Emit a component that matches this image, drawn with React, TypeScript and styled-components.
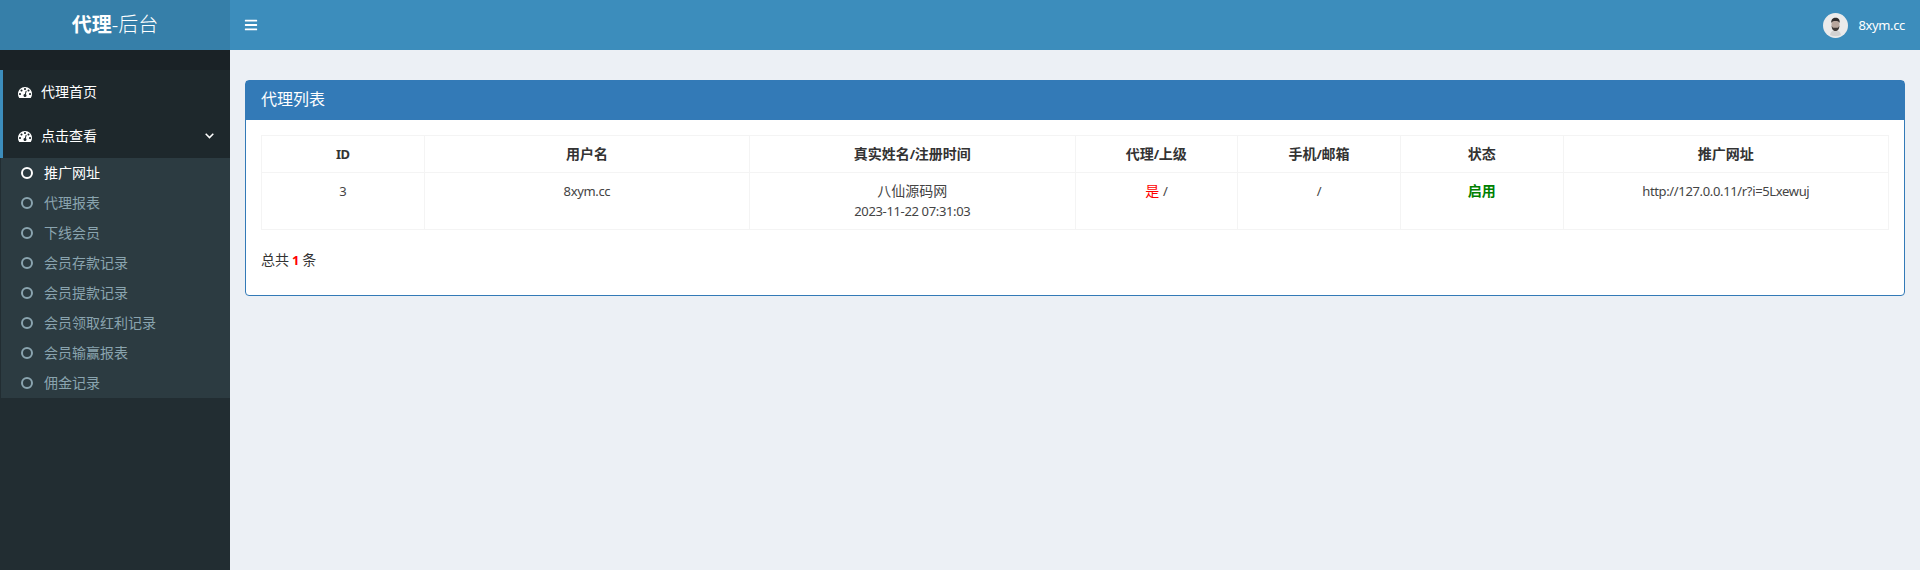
import React from "react";
import styled, { createGlobalStyle } from "styled-components";
import { FaBars } from "react-icons/fa";

const GlobalStyle = createGlobalStyle`
  html,
  body {
    margin: 0;
    height: 100%;
  }

  body {
    background: #ecf0f5;
    color: #333;
    font-family: "Noto Sans", "Noto Sans CJK SC", sans-serif;
    font-size: 14px;
    line-height: 20px;
  }

  #root {
    height: 100%;
  }

  * {
    box-sizing: border-box;
  }
`;

const Page = styled.div`
  display: grid;
  grid-template-columns: 230px 1fr;
  grid-template-rows: 50px 1fr;
  height: 100vh;
  overflow: hidden;
`;

const Logo = styled.div`
  display: flex;
  align-items: center;
  justify-content: center;
  background: #367fa9;
  color: #fff;
  font-size: 20px;
  font-weight: 300;

  b {
    font-weight: 700;
  }
`;

const TopBar = styled.header`
  display: flex;
  align-items: center;
  justify-content: space-between;
  padding: 0 15px;
  background: #3c8dbc;
  color: #fff;
  font-size: 14px;
`;

const MenuToggle = styled(FaBars)`
  margin-left: -1px;
`;

const UserBox = styled.div`
  display: flex;
  align-items: center;
  gap: 10px;
`;

/* latin text sits a bit smaller and tighter, the original face is narrow */
const Latin = styled.span`
  font-size: 13px;
  letter-spacing: -0.35px;
`;

const Sidebar = styled.aside`
  background: #222d32;
`;

const SidebarTop = styled.div`
  height: 20px;
  background: #1a2226;
`;

const MainItem = styled.div`
  display: flex;
  align-items: center;
  height: 44px;
  padding: 0 15px;
  border-left: 3px solid #3c8dbc;
  background: #1e282c;
  color: #fff;
  gap: 9px;
`;

const MainItemLabel = styled.span`
  flex: 1;
`;

const Chevron = styled.svg`
  margin-right: 1px;
`;

const SubMenu = styled.div`
  margin-left: 1px;
  background: #2c3b41;
`;

const SubItem = styled.div<{ $active?: boolean }>`
  display: flex;
  align-items: center;
  gap: 11px;
  height: 30px;
  padding-left: 20px;
  color: ${(props) => (props.$active ? "#fff" : "#8aa4af")};
`;

const Ring = styled.span`
  width: 12px;
  height: 12px;
  border: 2.5px solid currentColor;
  border-radius: 50%;
`;

const Content = styled.main`
  padding: 30px 15px 0;
`;

const Box = styled.section`
  height: 216px;
  border: 1px solid #337ab7;
  border-radius: 4px;
  background: #fff;
`;

const BoxTitle = styled.h3`
  display: flex;
  align-items: center;
  height: 39px;
  margin: 0;
  padding: 0 15px 3px;
  background: #337ab7;
  color: #fff;
  font-size: 16px;
  font-weight: 400;
`;

const BoxBody = styled.div`
  padding: 15px;
`;

const Table = styled.table`
  width: 100%;
  border-collapse: collapse;
  table-layout: fixed;
  text-align: center;

  th,
  td {
    border: 1px solid #f4f4f4;
    padding: 8px;
    vertical-align: top;
  }

  th {
    font-weight: 700;
  }

  td {
    color: #444;
  }
`;

const Column = styled.col<{ $wide?: boolean }>`
  width: ${(props) => (props.$wide ? "20%" : "10%")};
`;

const Yes = styled.span`
  color: #f00;
`;

const Enabled = styled.b`
  color: green;
`;

const Total = styled.div`
  margin-top: 20px;

  b {
    color: #f00;
  }
`;

const navItems = [
  "代理报表",
  "下线会员",
  "会员存款记录",
  "会员提款记录",
  "会员领取红利记录",
  "会员输赢报表",
  "佣金记录",
];

const GaugeIcon = () => (
  <svg width="14" height="14" viewBox="0 0 1792 1792" fill="currentColor">
    <path
      fillRule="evenodd"
      d="M384 1152q0-53-37.500-90.500T256 1024t-90.500 37.500T128 1152t37.500 90.500T256 1280t90.500-37.500T384 1152zm192-448q0-53-37.500-90.500T448 576t-90.500 37.500T320 704t37.500 90.500T448 832t90.500-37.500T576 704zm428 481l101-382q6-26-7.500-48.500T1059 725t-48 6.500-30 39.500l-101 382q-60 5-107 43.500t-63 98.500q-20 77 20 146t117 89 146-20 89-117q16-60-6-117t-72-91zm660-33q0-53-37.500-90.500T1536 1024t-90.500 37.500-37.500 90.500 37.500 90.500 90.500 37.500 90.500-37.500 37.500-90.500zm-640-640q0-53-37.500-90.500T896 384t-90.500 37.500T768 512t37.500 90.500T896 640t90.500-37.500T1024 512zm448 192q0-53-37.500-90.500T1344 576t-90.500 37.500T1216 704t37.500 90.500 90.500 37.500 90.500-37.500T1472 704zm320 448q0 261-141 483-19 29-54 29H195q-35 0-54-29Q0 1414 0 1152q0-182 71-348t191-286 286-191 348-71 348 71 286 191 191 286 71 348z"
    />
  </svg>
);

const Avatar = () => (
  <svg width="25" height="25" viewBox="0 0 25 25">
    <circle cx="12.500" cy="12.500" r="12.500" fill="#ebebeb" />
    <path d="M7 22c.6-3.400 2.600-4.800 5.500-4.800s4.900 1.400 5.500 4.800a12.500 12.500 0 0 1-11 0z" fill="#d2d2d2" />
    <ellipse cx="12.500" cy="11.500" rx="4" ry="5.500" fill="#b8a79e" />
    <path d="M8.300 10c-.4-3.400 1.700-5.200 4.300-5.200s4.500 1.700 4.100 5.200c-.8-1.600-1.700-2-4.200-2s-3.400.4-4.200 2z" fill="#2f2c2c" />
    <path d="M8.700 12.500c.5 1.400.8 2 1.700 2.200h4.200c.9-.2 1.200-.8 1.700-2.200.2 3.400-1.300 5.500-3.800 5.500s-4-2.100-3.800-5.500z" fill="#3f3936" />
  </svg>
);

export default function App() {
  return (
    <>
      <GlobalStyle />
      <Page>
        <Logo>
          <b>代理</b>-后台
        </Logo>
        <TopBar>
          <MenuToggle size={14} />
          <UserBox>
            <Avatar />
            <Latin>8xym.cc</Latin>
          </UserBox>
        </TopBar>
        <Sidebar>
          <SidebarTop />
          <MainItem>
            <GaugeIcon />
            <MainItemLabel>代理首页</MainItemLabel>
          </MainItem>
          <MainItem>
            <GaugeIcon />
            <MainItemLabel>点击查看</MainItemLabel>
            <Chevron width="9" height="6" viewBox="0 0 9 6" fill="none">
              <polyline points="0.700,0.800 4.500,4.600 8.300,0.800" stroke="currentColor" strokeWidth="1.500" />
            </Chevron>
          </MainItem>
          <SubMenu>
            <SubItem $active>
              <Ring />
              推广网址
            </SubItem>
            {navItems.map((item) => (
              <SubItem key={item}>
                <Ring />
                {item}
              </SubItem>
            ))}
          </SubMenu>
        </Sidebar>
        <Content>
          <Box>
            <BoxTitle>代理列表</BoxTitle>
            <BoxBody>
              <Table>
                <colgroup>
                  <Column />
                  <Column $wide />
                  <Column $wide />
                  <Column />
                  <Column />
                  <Column />
                  <Column $wide />
                </colgroup>
                <thead>
                  <tr>
                    <th>
                      <Latin>ID</Latin>
                    </th>
                    <th>用户名</th>
                    <th>
                      真实姓名<Latin>/</Latin>注册时间
                    </th>
                    <th>
                      代理<Latin>/</Latin>上级
                    </th>
                    <th>
                      手机<Latin>/</Latin>邮箱
                    </th>
                    <th>状态</th>
                    <th>推广网址</th>
                  </tr>
                </thead>
                <tbody>
                  <tr>
                    <td>
                      <Latin>3</Latin>
                    </td>
                    <td>
                      <Latin>8xym.cc</Latin>
                    </td>
                    <td>
                      八仙源码网
                      <br />
                      <Latin>2023-11-22 07:31:03</Latin>
                    </td>
                    <td>
                      <Yes>是</Yes> <Latin>/</Latin>
                    </td>
                    <td>
                      <Latin>/</Latin>
                    </td>
                    <td>
                      <Enabled>启用</Enabled>
                    </td>
                    <td>
                      <Latin>http://127.0.0.11/r?i=5Lxewuj</Latin>
                    </td>
                  </tr>
                </tbody>
              </Table>
              <Total>
                总共
                <Latin>
                  {" "}
                  <b>1</b>{" "}
                </Latin>
                条
              </Total>
            </BoxBody>
          </Box>
        </Content>
      </Page>
    </>
  );
}
